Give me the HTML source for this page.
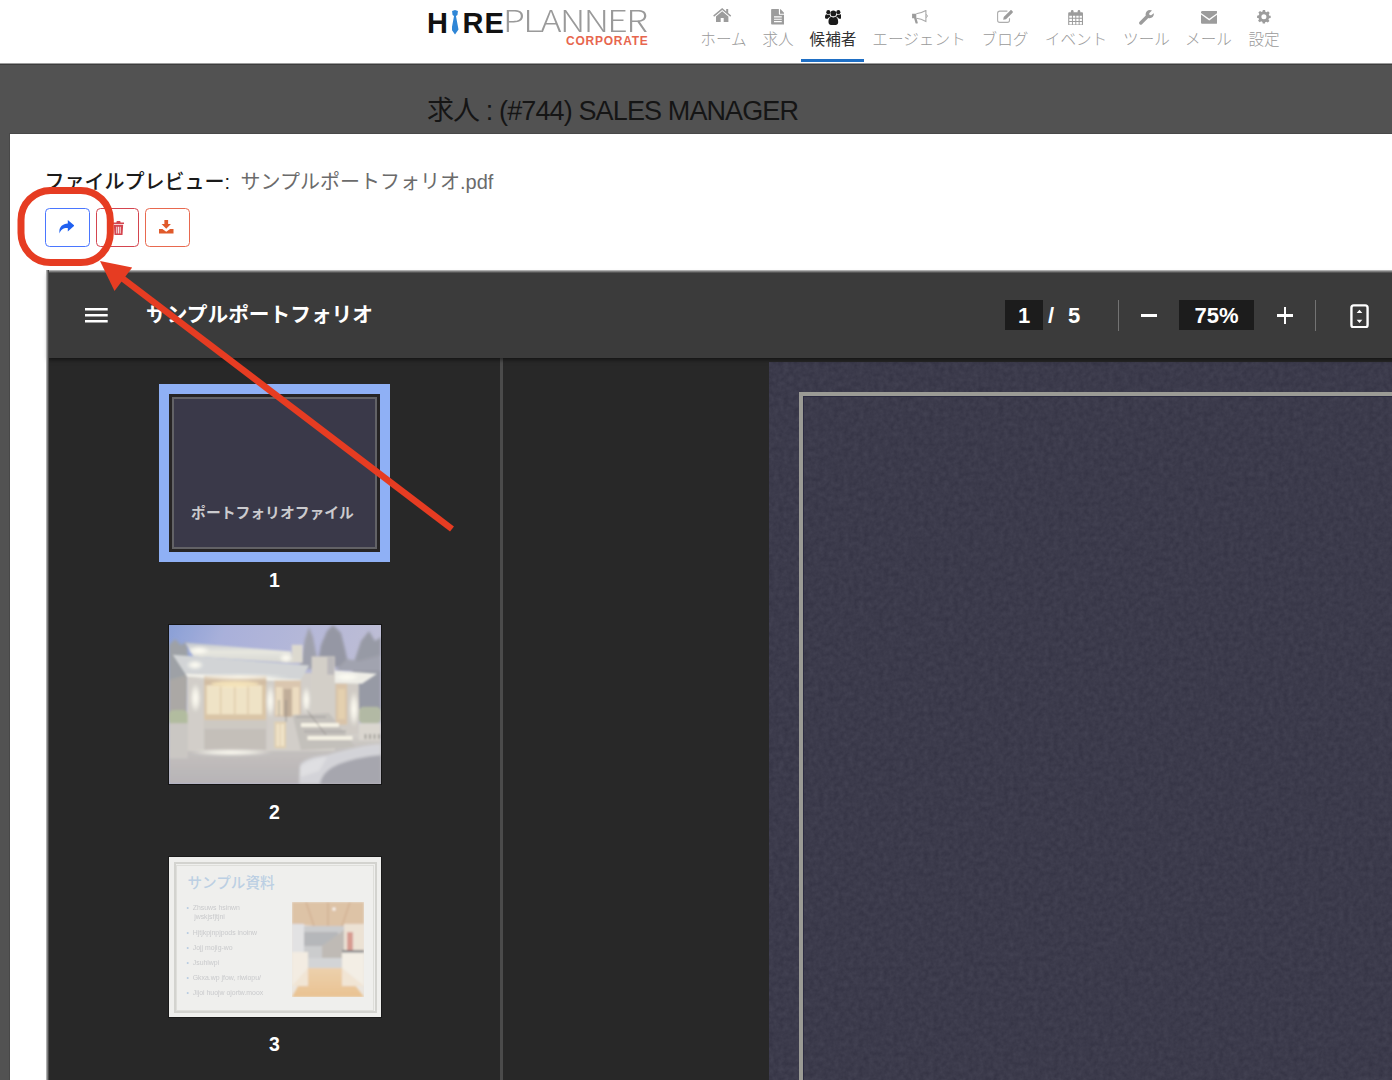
<!DOCTYPE html>
<html lang="ja">
<head>
<meta charset="utf-8">
<title>HirePlanner - ファイルプレビュー</title>
<style>
*{box-sizing:border-box;margin:0;padding:0}
html,body{width:1392px;height:1080px;overflow:hidden;background:#525252;font-family:"Liberation Sans","Noto Sans CJK JP",sans-serif}
.abs{position:absolute}
#header{position:absolute;left:0;top:0;width:1392px;height:65px;background:#fff;border-bottom:1px solid #3d3d3d;box-shadow:inset 0 -1px 0 #9c9c9c}
#logo{position:absolute;left:427px;top:4px;height:34px;white-space:nowrap}
#logo .hire span{position:absolute;top:1.5px;font-weight:bold;font-size:29px;line-height:34px;color:#111}
#logo .hire .tie{left:24.5px;top:6px;width:7px;height:24.5px;color:transparent;background:#2f86d6;font-size:10px;line-height:10px;overflow:hidden;clip-path:polygon(8% 4%,50% 0,92% 4%,85% 20%,64% 24%,100% 80%,50% 100%,0 80%,36% 24%,15% 20%)}
#logo .planner{position:absolute;left:76px;top:-1.8px;font-family:"Noto Sans CJK JP","Liberation Sans",sans-serif;font-weight:300;font-size:29.5px;line-height:34px;color:#9a9a9a;letter-spacing:-1.3px;transform:scaleX(1.21);transform-origin:0 0}
#logo .corp{position:absolute;left:139px;top:30px;font-weight:bold;font-size:12px;line-height:14px;color:#e7664e;letter-spacing:.75px}
.nav{position:absolute;top:0;height:64px;text-align:center;color:#9a9a9a;font-family:"Liberation Sans","Noto Sans CJK JP",sans-serif;font-weight:300;font-size:15.6px}
.ico{position:absolute;fill:#9c9c9c}
.ico.blk{fill:#1a1a1a}
.nav span{position:absolute;left:-20px;right:-20px;top:29.2px;line-height:22px;white-space:nowrap}
.nav.act{color:#333;font-weight:400}
.nav.act:after{content:"";position:absolute;left:-8px;right:-6.5px;top:59px;height:3px;background:#1f6fc4}
#title{position:absolute;left:427px;top:93.6px;font-size:27px;line-height:34px;color:#151515;white-space:nowrap;letter-spacing:-0.88px}
#modal{position:absolute;left:9px;top:133px;width:1400px;height:960px;background:#fff;border:1px solid #484848}
#fp{position:absolute;left:44.5px;top:168px;font-size:20px;line-height:28px;white-space:nowrap;color:#222}
#fp b{font-weight:500;color:#1a1a1a}
#fp span{color:#6b6b6b;margin-left:10.5px}
.btn{position:absolute;top:208px;height:39px;border:1px solid;border-radius:4.5px;background:#fff}
.btn svg{position:absolute;left:50%;top:50%}
#viewer{position:absolute;left:46px;top:270px;width:1360px;height:820px;background:#282828;border-top:2px solid #3b3b3b;border-left:2px solid #282828}
#viewer:before{content:"";position:absolute;left:-2px;top:-2px;width:100%;height:3px;background:linear-gradient(#c8c8c8,#6e6e6e 60%,#444);z-index:5}
#viewer:after{content:"";position:absolute;left:-2px;top:-2px;width:3px;height:100%;background:linear-gradient(90deg,#c8c8c8,#6e6e6e 60%,#333);z-index:5}
#tb{position:absolute;left:0;top:0;width:100%;height:86px;background:#3b3b3b;box-shadow:0 2px 4px rgba(0,0,0,.5)}
#tb .ttl{position:absolute;left:98px;top:28px;font-size:20.7px;line-height:30px;color:#fff;font-weight:700;white-space:nowrap}
.tbox{position:absolute;top:28px;height:30px;background:#1c1c1c;color:#fff;font-weight:bold;font-size:22px;line-height:31.4px;text-align:center}
.ttxt{position:absolute;top:28px;height:30px;color:#fff;font-weight:bold;font-size:22px;line-height:31.4px}
.vdiv{position:absolute;top:28px;width:1px;height:31px;background:#737373}
#side{position:absolute;left:0;top:86px;width:455px;height:740px;border-right:3px solid #4b4b4b}
.tn{margin-left:-.7px;position:absolute;color:#fff;font-weight:bold;font-size:19.5px;text-align:center;width:40px;line-height:22px}
#page{position:absolute;left:721px;top:90px;width:700px;height:760px;background:#373648;overflow:hidden}
#page i{position:absolute;left:30px;top:30px;width:700px;height:760px;border:4px solid #9b9b95;box-shadow:inset 1px 1px 0 #2a2a40}
</style>
</head>
<body>
<div id="header">
  <div id="logo">
    <div class="hire"><span style="left:0">H</span><span class="tie">i</span><span style="left:35.6px">R</span><span style="left:57.6px">E</span></div>
    <div class="planner">PLANNER</div>
    <div class="corp">CORPORATE</div>
  </div>
  <div class="nav" style="left:701px;width:45px"><span>ホーム</span></div>
  <div class="nav" style="left:762px;width:32px"><span>求人</span></div>
  <div class="nav act" style="left:809px;width:48px"><span>候補者</span></div>
  <div class="nav" style="left:873px;width:92px"><span>エージェント</span></div>
  <div class="nav" style="left:982px;width:46px"><span>ブログ</span></div>
  <div class="nav" style="left:1046px;width:60px"><span>イベント</span></div>
  <div class="nav" style="left:1124px;width:45px"><span>ツール</span></div>
  <div class="nav" style="left:1185px;width:47px"><span>メール</span></div>
  <div class="nav" style="left:1249px;width:30px"><span>設定</span></div>

  <svg class="ico" style="left:713.2px;top:8px" width="18.400" height="14.400" viewBox="0 0 18 14.400"><path d="M9 0 0 7.600.9 8.700 9 1.900l8.100 6.800.9-1.100-3-2.500V1h-2v2.400z"/><path d="M9 3.200 2.800 8.400v6h4.700V10h3v4.400h4.700v-6z"/></svg>
  <svg class="ico" style="left:770.7px;top:9.200px" width="13.800" height="15.500" viewBox="0 0 14 16"><path fill-rule="evenodd" d="M.8 0H8v5.200c0 .5.300.8.800.8H14v9.200c0 .5-.3.800-.8.800H.8C.3 16 0 15.700 0 15.200V.8C0 .3.300 0 .8 0zM3 7.500v1.200h8V7.500zm0 2.500v1.200h8V10zm0 2.500v1.200h8v-1.200z"/><path d="M9.200 0c.3.100.6.300.9.600l3.300 3.300c.3.300.5.600.6.900H9.200z"/></svg>
  <svg class="ico blk" style="left:824.7px;top:9.200px" width="16.700" height="16.100" viewBox="0 0 17 16"><circle cx="8.500" cy="4.300" r="2.900"/><path d="M3.600 13.500C3.400 10 5 7.800 6.600 7.800c.5.400 1.200.7 1.900.7s1.400-.3 1.900-.7c1.600 0 3.200 2.200 3 5.700-.1 1.500-1.100 2.500-2.500 2.500H6.100c-1.400 0-2.400-1-2.500-2.500z"/><circle cx="3.400" cy="3" r="2.100"/><circle cx="13.600" cy="3" r="2.100"/><path d="M1.800 9.800C.6 9.800 0 9.200 0 8.100 0 6.200.7 5.100 1.700 5.100c.5.400 1.100.6 1.700.6.500 0 1-.1 1.400-.400.100.9.400 1.700 1 2.300-1.300.1-2.400.9-3 2.200zM15.200 9.800c1.200 0 1.800-.6 1.800-1.700 0-1.900-.7-3-1.700-3-.5.400-1.100.6-1.700.6-.5 0-1-.1-1.400-.400-.1.900-.4 1.700-1 2.300 1.300.1 2.400.9 3 2.200z"/></svg>
  <svg class="ico" style="left:911.5px;top:10px" width="16.200" height="13.500" viewBox="0 0 16 13.500"><path d="M0 3.800h4.200v4.400H0zM2 8.200h2.400l1.300 4.600c.1.500-.1.700-.5.700H4.100c-.4 0-.6-.2-.7-.6z"/><path fill="none" stroke="#a9a9a9" stroke-width="1.100" d="M4.200 3.800C8 3.400 11 2.200 13.800.6v10.800C11 9.800 8 8.600 4.200 8.200"/><path fill="none" stroke="#a9a9a9" stroke-width="1" d="M14 4.500c1.600 0 1.600 3 0 3"/></svg>
  <svg class="ico" style="left:997px;top:9.500px" width="16.500" height="13" viewBox="0 0 16.500 13"><path fill="none" stroke="#adadad" stroke-width="1.100" d="M12.500 8.200v2c0 1.300-.9 2.200-2.200 2.200H2.800C1.500 12.400.6 11.500.6 10.200V3.300C.6 2 1.500 1.100 2.800 1.100h7.600"/><path d="M6.200 9.800l.5-2.800 6.600-6.600c.4-.4 1-.4 1.400 0l.9.900c.4.400.4 1 0 1.400L9 9.300z"/></svg>
  <svg class="ico" style="left:1068px;top:9.500px" width="15.200" height="15.800" viewBox="0 0 15 16"><path fill-rule="evenodd" d="M1.200 2.400h12.600c.7 0 1.200.5 1.200 1.200v11.200c0 .7-.5 1.200-1.200 1.200H1.200C.5 16 0 15.500 0 14.800V3.600c0-.7.500-1.200 1.200-1.200zM1.100 5.700v2.200h2.700V5.700zm3.700 0v2.200h2.400V5.700zm3.400 0v2.200h2.400V5.700zm3.400 0v2.200h2.300V5.700zM1.100 8.900v2.300h2.700V8.900zm3.700 0v2.300h2.400V8.900zm3.400 0v2.300h2.400V8.900zm3.400 0v2.300h2.300V8.900zM1.100 12.200v2.600h2.700v-2.600zm3.700 0v2.600h2.400v-2.600zm3.400 0v2.600h2.400v-2.600zm3.400 0v2.600h2.300v-2.600z"/><rect x="2.800" y="0" width="2.600" height="4.200" rx="1.200"/><rect x="9.600" y="0" width="2.600" height="4.200" rx="1.200"/></svg>
  <svg class="ico" style="left:1138.900px;top:10.100px" width="15" height="14.700" viewBox="0 0 15 14.700"><path d="M14.800 3.200c.6 2.800-1.600 5.300-4.400 5.100-.4 0-.8-.1-1.100-.2L3 14.200c-.7.700-1.700.7-2.400 0s-.7-1.700 0-2.400l6.200-6.200C5.900 2.800 8 0 10.900 0c.8 0 1.500.2 2.100.5L10.200 3.300l.3 1.600 1.600.3z"/></svg>
  <svg class="ico" style="left:1200.600px;top:11.100px" width="16.500" height="12.800" viewBox="0 0 16.500 12.800"><path d="M1.400 0h13.700c.8 0 1.400.6 1.400 1.400v.5L8.250 7.800 0 1.900v-.5C0 .6.600 0 1.400 0z"/><path d="M0 3.500l8.250 5.900L16.500 3.500v7.900c0 .8-.6 1.400-1.400 1.400H1.400c-.8 0-1.400-.6-1.400-1.400z"/></svg>
  <svg class="ico" style="left:1257.400px;top:10.300px" width="13.800" height="13.600" viewBox="-7 -7 14 14"><path fill-rule="evenodd" d="M-1.200-7h2.400l.3 1.700 1.300.6 1.500-1 1.700 1.700-1 1.500.6 1.300L7-1.200v2.400l-1.700.3-.6 1.300 1 1.500-1.700 1.700-1.500-1-1.300.6L1.200 7h-2.400l-.3-1.700-1.300-.6-1.500 1-1.700-1.700 1-1.500-.6-1.300L-7 1.200v-2.400l1.700-.3.600-1.300-1-1.500 1.700-1.700 1.500 1 1.300-.6zM0-2.600A2.600 2.600 0 1 0 0 2.600 2.600 2.600 0 0 0 0-2.600z"/></svg>
</div>

<div id="title">求人 : (#744) SALES MANAGER</div>

<div id="modal"></div>
<div id="fp"><b>ファイルプレビュー:</b><span>サンプルポートフォリオ.pdf</span></div>

<div class="btn" style="left:45px;width:45px;border-color:#4a76ff"><svg style="width:16.5px;height:14.5px;margin:-7.5px 0 0 -10px" viewBox="0 0 16 14" preserveAspectRatio="none"><path fill="#2060f0" d="M9.500 0 16 5.500 9.500 11V7.700C5 7.500 2.500 9.500 1.500 13 .5 7.500 4 3.600 9.500 3.400z"/></svg></div>
<div class="btn" style="left:96px;width:43px;border-color:#d4454f"><svg style="width:11px;height:14.5px;margin:-7px 0 0 -4.5px" viewBox="0 0 13 15" preserveAspectRatio="none"><path fill="#d4454f" d="M4.500 0h4l.5 1.500H13V3H0V1.500h4zM1 4h11l-.8 11H1.800zM4 6v7h1V6zm2 0v7h1V6zm2 0v7h1V6z" fill-rule="evenodd"/></svg></div>
<div class="btn" style="left:145px;width:45px;border-color:#e8694f"><svg style="width:14.5px;height:13.5px;margin:-7.5px 0 0 -8.5px" viewBox="0 0 14 14" preserveAspectRatio="none"><path fill="#e05a2b" d="M5.200 0h3.600v4.200h2.700L7 9 2.500 4.200h2.700zM0 9.300h3.300L7 12.200l3.700-2.900H14V14H0z"/></svg></div>

<div id="viewer">
  <div id="side">
    <div class="abs" style="left:111px;top:26px;width:231px;height:178px;background:#8fb0f5"></div>
    <div class="abs" style="left:121px;top:36px;width:211px;height:158px;background:#3a3949;border:3px solid #262424"><div class="abs" style="left:0;top:0;right:0;bottom:0;border:2.5px solid #626266"></div><div class="abs" style="left:-4px;right:0;top:106px;text-align:center;color:#cbcbce;font-weight:bold;font-size:14.8px;line-height:20px;white-space:nowrap">ポートフォリオファイル</div></div>
    <div class="tn" style="left:207px;top:211px">1</div>
    <div id="t2" class="abs" style="left:120px;top:266px;width:214px;height:161px;background:#b0acae;border:1px solid #151515;overflow:hidden">
<svg width="212" height="159" viewBox="0 0 212 159" style="position:absolute;left:0;top:0">
<defs>
<linearGradient id="sky" x1="0" y1="0" x2="1" y2=".35"><stop offset="0" stop-color="#7d95d2"/><stop offset=".25" stop-color="#a0a8d6"/><stop offset=".6" stop-color="#adb0d4"/><stop offset="1" stop-color="#b9b8d0"/></linearGradient>
<linearGradient id="gnd" x1="0" y1="0" x2="0" y2="1"><stop offset="0" stop-color="#cfcbc4"/><stop offset=".35" stop-color="#bdb9b7"/><stop offset="1" stop-color="#afabae"/></linearGradient>
<linearGradient id="rf" x1="0" y1="0" x2="0" y2="1"><stop offset="0" stop-color="#b9bdc6"/><stop offset=".45" stop-color="#e4e4dc"/><stop offset="1" stop-color="#d2d2cc"/></linearGradient>
<radialGradient id="glow"><stop offset="0" stop-color="#fffdf2" stop-opacity="1"/><stop offset=".5" stop-color="#fffdf2" stop-opacity=".7"/><stop offset="1" stop-color="#fffdf2" stop-opacity="0"/></radialGradient>
<filter id="b1" x="-5%" y="-5%" width="110%" height="110%"><feGaussianBlur stdDeviation=".8"/></filter>
<filter id="b2" x="-10%" y="-10%" width="120%" height="120%"><feGaussianBlur stdDeviation="1.700"/></filter>
</defs>
<rect width="212" height="159" fill="url(#sky)"/>
<g filter="url(#b2)">
<path d="M0 20 6 14 12 20 18 17 20 48 18 92 0 95z" fill="#93979c"/>
<path d="M0 55 18 50 18 92 0 95z" fill="#a29f9b"/>
<path d="M130 44 133 30 136 14 140 2 144 12 147 28 150 44z" fill="#9496a3"/>
<path d="M148 42 152 20 158 6 164 0 172 8 176 24 180 42z" fill="#8a8c9a"/>
<path d="M180 86 184 40 192 16 200 6 206 16 212 12 212 86z" fill="#8c8f9b"/>
<path d="M166 46 212 46 212 30 190 36 178 34z" fill="#9799a6"/>
</g>
<g filter="url(#b1)">
<rect x="0" y="108" width="212" height="51" fill="url(#gnd)"/>
<rect x="17.900" y="48" width="148" height="78" fill="#cdc9c3"/>
<path d="M16.200 17.400 122 26.400 123.600 38 24.500 31.400z" fill="url(#rf)"/>
<rect x="122.800" y="19.800" width="10.800" height="18" fill="#d9d5ca"/>
<path d="M3.800 29.800 140.200 40.500 131.900 54.500 16.200 48.800z" fill="#cdd0d2"/>
<path d="M16.200 48.800 131.900 54.500 131 57 18 51.500z" fill="#f1f0e8"/>
<rect x="142.600" y="31.400" width="23.200" height="62" fill="#cfcac2"/>
<rect x="158.300" y="32.200" width="6.700" height="17.400" fill="#b4b1b4"/>
<rect x="165.800" y="57" width="24" height="52" fill="#cbc6bf"/>
<path d="M165.800 45.500 208 48.800 193 58.700 165.800 57.900z" fill="#ecebe4"/>
<rect x="35.200" y="51" width="62" height="44" fill="#d6bf9e"/>
<rect x="35.200" y="51" width="62" height="9" fill="#cdb699"/>
<rect x="37.700" y="60.300" width="55.300" height="29" fill="#eee0c0"/>
<path d="M51.700 60.300v29M65.800 60.300v29M79 60.300v29" stroke="#d6bf98" stroke-width="1.100"/>
<rect x="105.500" y="55.400" width="26.400" height="36.300" fill="#d6c0a6"/>
<rect x="107" y="62" width="6.500" height="28" fill="#ead9ba"/>
<rect x="123.500" y="62" width="6.500" height="28" fill="#ead9ba"/>
<rect x="114.500" y="64" width="8" height="27.700" fill="#b9a48e"/>
<rect x="35.200" y="95" width="62" height="30" fill="#beb8b2"/>
<rect x="35.200" y="95" width="62" height="9" fill="#c8c3bc"/>
<rect x="105.500" y="96.700" width="11.500" height="26.400" fill="#decba8"/>
<rect x="107.500" y="99" width="3" height="22" fill="#efe2c4"/><rect x="112" y="99" width="3" height="22" fill="#efe2c4"/>
<rect x="166.600" y="58.700" width="11.600" height="41" fill="#d5bea0"/>
<rect x="169" y="64" width="7" height="30" fill="#e1cba6"/>
<path d="M123.600 90 160 88 186.400 122 132 125z" fill="#bdb9b4"/>
<path d="M132 100h38M138.500 113h45" stroke="#f4f0e2" stroke-width="4"/>
<path d="M127 92h30M135 106.500h42" stroke="#a9a5a2" stroke-width="2"/>
<path d="M110 75v16M117 75v22M137 84l20 26" stroke="#7d7872" stroke-width=".8" fill="none"/>
<rect x="0" y="85" width="18.700" height="17" rx="5" fill="#aab595"/>
<rect x="189.800" y="81.800" width="22.200" height="17" rx="5" fill="#aab29a"/>
<rect x="189.800" y="98.300" width="22.200" height="17" fill="#d6d2ca"/>
<path d="M196.500 109v5M201 109v5M205.500 109v5M210 109v5" stroke="#77746f" stroke-width="1.300"/>
<rect x="0" y="98.300" width="18.700" height="35" fill="#c5c1bd"/>
</g>
<g filter="url(#b2)">
<ellipse cx="26.500" cy="73" rx="5.500" ry="15" fill="url(#glow)"/>
<ellipse cx="101.300" cy="76" rx="4.500" ry="17" fill="url(#glow)"/>
<ellipse cx="137.300" cy="75" rx="4.500" ry="14" fill="url(#glow)"/>
<ellipse cx="185" cy="84" rx="5" ry="18" fill="url(#glow)"/>
<ellipse cx="30" cy="25.500" rx="11" ry="4.500" fill="url(#glow)"/>
<ellipse cx="117" cy="33" rx="7" ry="5" fill="url(#glow)"/>
<ellipse cx="26" cy="40" rx="9" ry="5" fill="url(#glow)"/>
<ellipse cx="70" cy="52" rx="50" ry="3" fill="url(#glow)"/>
<ellipse cx="178" cy="52" rx="13" ry="4" fill="url(#glow)"/>
<ellipse cx="62" cy="127.500" rx="42" ry="3.500" fill="url(#glow)"/>
<ellipse cx="66" cy="59" rx="24" ry="3" fill="#fbe9b6" opacity=".8"/>
<path d="M130 159 131 140C135 134 146 131 158 130 178 124 196 120 212 119V159z" fill="#cfcfd4"/>
<path d="M151 159C152 150 160 143 170 139 186 133 200 131 212 130V159z" fill="#9c9ca5"/>
<path d="M131 142C137 136 148 133 158 132L150 146 131 152z" fill="#dcdcdf"/>
</g>
<rect width="212" height="159" fill="#fff" opacity=".1"/>
</svg></div>
    <div class="tn" style="left:207px;top:443px">2</div>
    <div id="t3" class="abs" style="left:120px;top:498px;width:214px;height:162px;background:#efefed;border:1px solid #1a1a1a;overflow:hidden">
<div class="abs" style="left:4.5px;top:5px;width:203px;height:151px;border:2px solid #d3d3cf"></div>
<div class="abs" style="left:7px;top:7.5px;width:198px;height:146px;border:1px solid #dededa"></div>
<div class="abs" style="left:18.5px;top:15.5px;font-size:14.6px;line-height:20px;color:#bccfe3;white-space:nowrap;font-weight:500">サンプル資料</div>
<ul class="abs" style="left:17.5px;top:46px;list-style:none;font-size:6.9px;line-height:9px;color:#c9cacc;white-space:nowrap;filter:blur(.3px)">
<li style="position:absolute;top:0"><span style="color:#b8cce2">•</span>&nbsp; Zhsuws hsinwn<br>&nbsp;&nbsp;&nbsp; jwskjsfjtjni</li>
<li style="position:absolute;top:25px"><span style="color:#b8cce2">•</span>&nbsp; Hjtjkpjnpjpods inoinw</li>
<li style="position:absolute;top:40px"><span style="color:#b8cce2">•</span>&nbsp; Jojj mojig-wo</li>
<li style="position:absolute;top:54.500px"><span style="color:#b8cce2">•</span>&nbsp; Jsuhlwpi</li>
<li style="position:absolute;top:69.500px"><span style="color:#b8cce2">•</span>&nbsp; Gkxa.wp jfow, riwiopu/</li>
<li style="position:absolute;top:85px"><span style="color:#b8cce2">•</span>&nbsp; Jijoi huojw ojortw.moox</li>
</ul>
<svg width="72" height="95" viewBox="0 0 72 95" style="position:absolute;left:123px;top:45px">
<defs><filter id="b3" x="-5%" y="-5%" width="110%" height="110%"><feGaussianBlur stdDeviation=".8"/></filter>
<linearGradient id="flr" x1="0" y1="0" x2="0" y2="1"><stop offset="0" stop-color="#e6c090"/><stop offset="1" stop-color="#e2ae6c"/></linearGradient></defs>
<rect width="72" height="95" fill="#e4ddd4"/>
<g filter="url(#b3)">
<path d="M0 0H72V22L50 24H22L0 22z" fill="#d2ae88"/>
<path d="M36 0v24M14 0l8 24M58 0l-8 24" stroke="#c49a70" stroke-width="1.500"/>
<rect x="12" y="24" width="40" height="40" fill="#b9babc"/>
<path d="M12 30 46 30 46 34 30 44 12 44z" fill="#9c9ea2"/>
<path d="M30 44 52 28V58H30z" fill="#a9a39c"/>
<rect x="0" y="22" width="12" height="46" fill="#d8d8da"/>
<rect x="52" y="22" width="20" height="28" fill="#e6d8c6"/>
<rect x="55" y="30" width="6" height="18" fill="#c9786a"/>
<rect x="0" y="50" width="16" height="34" fill="#efe6d8"/>
<rect x="50" y="50" width="22" height="34" fill="#efe8dc"/>
<rect x="50" y="48" width="22" height="2.500" fill="#55555a"/>
<rect x="16" y="56" width="34" height="10" fill="#c4c6c8"/>
<path d="M16 66H50L72 95H0z" fill="url(#flr)"/>
<path d="M0 84 16 66V84zM72 84 50 66V84z" fill="#ecdcc6"/>
<circle cx="42" cy="7" r="1.500" fill="#fff"/>
</g>
<rect width="72" height="95" fill="#fff" opacity=".26"/>
</svg></div>
    <div class="tn" style="left:207px;top:675px">3</div>
  </div>
  <div id="page"><svg class="abs" style="left:0;top:0" width="630" height="730"><filter id="nz" x="0" y="0" width="100%" height="100%" color-interpolation-filters="sRGB"><feTurbulence type="fractalNoise" baseFrequency=".2" numOctaves="3" seed="4"/><feColorMatrix type="matrix" values="1 0 0 0 0 1 0 0 0 0 1 0 0 0 0 0 0 0 0 1"/></filter><rect width="630" height="730" filter="url(#nz)" opacity=".065"/></svg><i></i></div>
  <div id="tb">
    <svg class="abs" style="left:37.3px;top:34px" width="24" height="18" viewBox="0 0 24 18"><path fill="#fff" d="M0 1.900h22.700v2.700H0zM0 7.900h22.700v2.700H0zM0 13.900h22.700v2.700H0z"/></svg>
    <div class="ttl">サンプルポートフォリオ</div>
    <div class="tbox" style="left:957px;width:38px">1</div>
    <div class="ttxt" style="left:1000px">/</div>
    <div class="ttxt" style="left:1020px">5</div>
    <div class="vdiv" style="left:1070px"></div>
    <div class="abs" style="left:1093px;top:42px;width:16px;height:2.5px;background:#fff"></div>
    <div class="tbox" style="left:1131px;width:75px">75%</div>
    <div class="abs" style="left:1229px;top:42px;width:16px;height:2.5px;background:#fff"></div>
    <div class="abs" style="left:1235.7px;top:35px;width:2.5px;height:16.5px;background:#fff"></div>
    <div class="vdiv" style="left:1267px"></div>
    <svg class="abs" style="left:1301.5px;top:31.5px" width="19" height="24.7" viewBox="0 0 20 26"><rect x="1.500" y="1.500" width="17" height="23" rx="2.500" fill="none" stroke="#fff" stroke-width="2.500"/><path fill="#fff" d="M10 6l3 3.500H7zM10 20l3-3.500H7z"/></svg>
  </div>
</div>

<svg class="abs" style="left:0;top:0;pointer-events:none;z-index:20" width="1392" height="1080" viewBox="0 0 1392 1080">
  <rect x="21" y="190.400" width="89.300" height="72.200" rx="29.500" ry="29.500" fill="none" stroke="#e63c22" stroke-width="7"/>
  <line x1="452" y1="529" x2="122" y2="278" stroke="#e63c22" stroke-width="6.500"/>
  <polygon points="100,261 132.200,267.600 114.500,291" fill="#e63c22"/>
</svg>
</body>
</html>
